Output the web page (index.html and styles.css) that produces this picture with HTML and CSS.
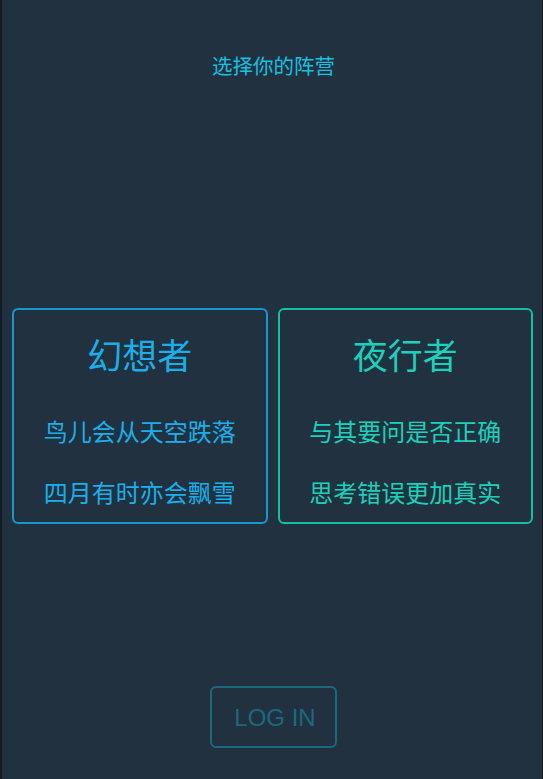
FILE: index.html
```html
<!DOCTYPE html>
<html lang="zh">
<head>
<meta charset="utf-8">
<title>选择你的阵营</title>
<link rel="stylesheet" href="styles.css">
</head>
<body>
<div class="screen">
  <h1 class="heading">选择你的阵营</h1>
  <div class="cards">
    <div class="card card-dreamer">
      <div class="card-title">幻想者</div>
      <p class="card-line first">鸟儿会从天空跌落</p>
      <p class="card-line">四月有时亦会飘雪</p>
    </div>
    <div class="card card-night">
      <div class="card-title">夜行者</div>
      <p class="card-line first">与其要问是否正确</p>
      <p class="card-line">思考错误更加真实</p>
    </div>
  </div>
  <div class="actions">
    <button class="login">LOG IN</button>
  </div>
</div>
</body>
</html>
```
FILE: styles.css
```css
html, body {
  margin: 0;
  padding: 0;
  height: 100%;
  background: #141c24;
}
.screen {
  margin-left: 2px;
  margin-right: 1px;
  min-height: 779px;
  background: #22313f;
  font-family: "Noto Sans CJK SC", "Noto Sans", sans-serif;
  display: flex;
  flex-direction: column;
  box-sizing: border-box;
  padding-top: 50px;
}
.heading {
  margin: 0 0 0 3px;
  font-size: 20.5px;
  font-weight: 400;
  line-height: 30px;
  text-align: center;
  color: #16c2e2;
}
.cards {
  margin-top: 228px;
  display: grid;
  grid-template-columns: 1fr 1fr;
  column-gap: 10px;
  padding: 0 9px 0 10px;
}
.card {
  border: 2px solid;
  border-radius: 6px;
  height: 216px;
  box-sizing: border-box;
  padding-top: 19px;
  text-align: center;
}
.card-dreamer {
  border-color: #1499d0;
  color: #18b0ea;
}
.card-night {
  border-color: #14bfa8;
  color: #18d2bc;
}
.card-title {
  font-size: 35px;
  line-height: 50px;
}
.card-line {
  margin: 21px 0 0;
  font-size: 24px;
  line-height: 40px;
}
.card-line.first {
  margin-top: 32px;
}
.actions {
  margin-top: 162px;
  display: flex;
  justify-content: center;
}
.login {
  width: 127px;
  height: 62px;
  margin-left: 2px;
  background: transparent;
  border: 2px solid #1a6a7e;
  border-radius: 6px;
  color: #1a6a7e;
  font-family: "Liberation Sans", Arial, sans-serif;
  font-size: 24px;
  padding: 2px 0 0 4px;
}
```
